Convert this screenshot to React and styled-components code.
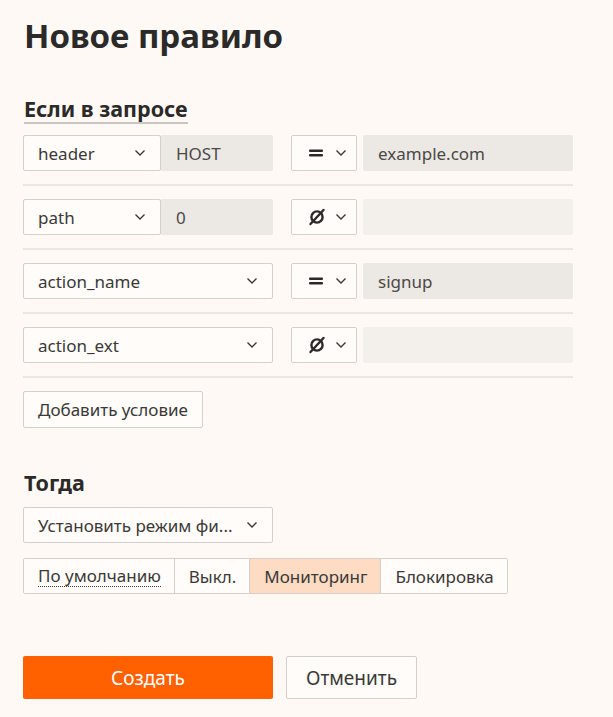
import React from 'react'
import styled, { createGlobalStyle } from 'styled-components'

const GlobalStyle = createGlobalStyle`
  body {
    margin: 0;
    background: #fef9f4;
    font-family: "Noto Sans", Roboto, sans-serif;
    color: #2b2a29;
  }
`

const Page = styled.div`
  padding: 16px 40px 18px 23px;
  width: 550px;
`

const Title = styled.h1`
  margin: 0 0 40px 1px;
  font-size: 33px;
  line-height: 40px;
  font-weight: 700;
`

const SectionTitle = styled.h2`
  display: inline-block;
  margin: 0 0 11px 1px;
  font-size: 21.5px;
  line-height: 26px;
  font-weight: 700;
  border-bottom: 2px solid #c9c5c0;
`

const Heading = styled.h2`
  margin: 0 0 11px 1px;
  font-size: 21.5px;
  line-height: 26px;
  font-weight: 700;
`

const Row = styled.div`
  display: flex;
  align-items: center;
  padding: 0 0 13px;
  margin-bottom: 13px;
  border-bottom: 2px solid #ebe6e0;
`

const FieldGroup = styled.div`
  display: flex;
  width: 250px;
  margin-right: 18px;
`

const SelectBox = styled.div`
  box-sizing: border-box;
  display: flex;
  align-items: center;
  justify-content: space-between;
  height: 36px;
  width: ${p => p.$w}px;
  padding: 0 14px 0 14px;
  border: 1px solid #d3cfca;
  border-radius: 2px;
  background: #fffcf9;
  font-size: 17px;
  color: #3a3938;
`

const OpBox = styled(SelectBox)`
  padding: 0 9px 0 16px;
  margin-right: 6px;
`

const Input = styled.div`
  box-sizing: border-box;
  flex: 1;
  height: 36px;
  display: flex;
  align-items: center;
  padding: 0 15px;
  background: ${p => (p.$empty ? '#f3efea' : '#ece8e3')};
  border-radius: 0 2px 2px 0;
  font-size: 17px;
  color: #4a4948;
`

const ValueInput = styled(Input)`
  border-radius: 2px;
`

const Button = styled.button`
  box-sizing: border-box;
  height: 37px;
  padding: 0 14px;
  border: 1px solid #d3cfca;
  border-radius: 2px;
  background: #fffcf9;
  font-family: inherit;
  font-size: 17px;
  color: #3a3938;
`

const Then = styled.div`
  margin-top: 42px;
`

const Segmented = styled.div`
  display: inline-flex;
  margin-top: 15px;
  border: 1px solid #d3cfca;
  border-radius: 2px;
`

const Segment = styled.div`
  height: 34px;
  display: flex;
  align-items: center;
  padding: 0 13px 0 14px;
  font-size: 17px;
  color: #3a3938;
  background: ${p => (p.$active ? '#fddcc3' : '#fffcf9')};
  & + & {
    border-left: 1px solid #d3cfca;
  }
`

const Dotted = styled.span`
  border-bottom: 1px dotted #3a3938;
  line-height: 20px;
`

const Actions = styled.div`
  display: flex;
  gap: 13px;
  margin-top: 62px;
`

const PrimaryButton = styled.button`
  width: 250px;
  height: 43px;
  border: none;
  border-radius: 2px;
  background: #ff6000;
  color: #fff;
  font-family: inherit;
  font-size: 19px;
`

const SecondaryButton = styled(PrimaryButton)`
  width: 131px;
  background: #fffcf9;
  border: 1px solid #d3cfca;
  color: #3a3938;
`

const Chevron = () => (
  <svg width="12" height="8" viewBox="0 0 12 8" fill="none">
    <path d="M1.5 1.5l4.5 4.5 4.5-4.5" stroke="#3a3938" strokeWidth="1.4" />
  </svg>
)

const EqIcon = () => (
  <svg width="16" height="12" viewBox="0 0 16 12">
    <rect x="1" y="2.5" width="14" height="2.6" rx="1" fill="#2b2a29" />
    <rect x="1" y="7" width="14" height="2.6" rx="1" fill="#2b2a29" />
  </svg>
)

const EmptyIcon = () => (
  <svg width="18" height="18" viewBox="0 0 18 18" fill="none">
    <circle cx="9" cy="9" r="5.6" stroke="#2b2a29" strokeWidth="2.4" />
    <path d="M2.5 16L15.5 2" stroke="#2b2a29" strokeWidth="2.4" strokeLinecap="round" />
  </svg>
)

const rows = [
  { field: 'header', key: 'HOST', op: 'eq', value: 'example.com' },
  { field: 'path', key: '0', op: 'empty', value: '' },
  { field: 'action_name', op: 'eq', value: 'signup' },
  { field: 'action_ext', op: 'empty', value: '' }
]

function ConditionRow({ row }) {
  return (
    <Row>
      <FieldGroup>
        <SelectBox $w={row.key !== undefined ? 138 : 250}>
          {row.field}
          <Chevron />
        </SelectBox>
        {row.key !== undefined && <Input>{row.key}</Input>}
      </FieldGroup>
      <OpBox $w={66}>
        {row.op === 'eq' ? <EqIcon /> : <EmptyIcon />}
        <Chevron />
      </OpBox>
      <ValueInput $empty={!row.value}>{row.value}</ValueInput>
    </Row>
  )
}

export default function App() {
  return (
    <Page>
      <GlobalStyle />
      <Title>Новое правило</Title>
      <SectionTitle>Если в запросе</SectionTitle>
      {rows.map(r => <ConditionRow key={r.field} row={r} />)}
      <Button>Добавить условие</Button>
      <Then>
        <Heading>Тогда</Heading>
        <SelectBox $w={250}>
          Установить режим фи...
          <Chevron />
        </SelectBox>
        <Segmented>
          <Segment><Dotted>По умолчанию</Dotted></Segment>
          <Segment>Выкл.</Segment>
          <Segment $active>Мониторинг</Segment>
          <Segment>Блокировка</Segment>
        </Segmented>
      </Then>
      <Actions>
        <PrimaryButton>Создать</PrimaryButton>
        <SecondaryButton>Отменить</SecondaryButton>
      </Actions>
    </Page>
  )
}
